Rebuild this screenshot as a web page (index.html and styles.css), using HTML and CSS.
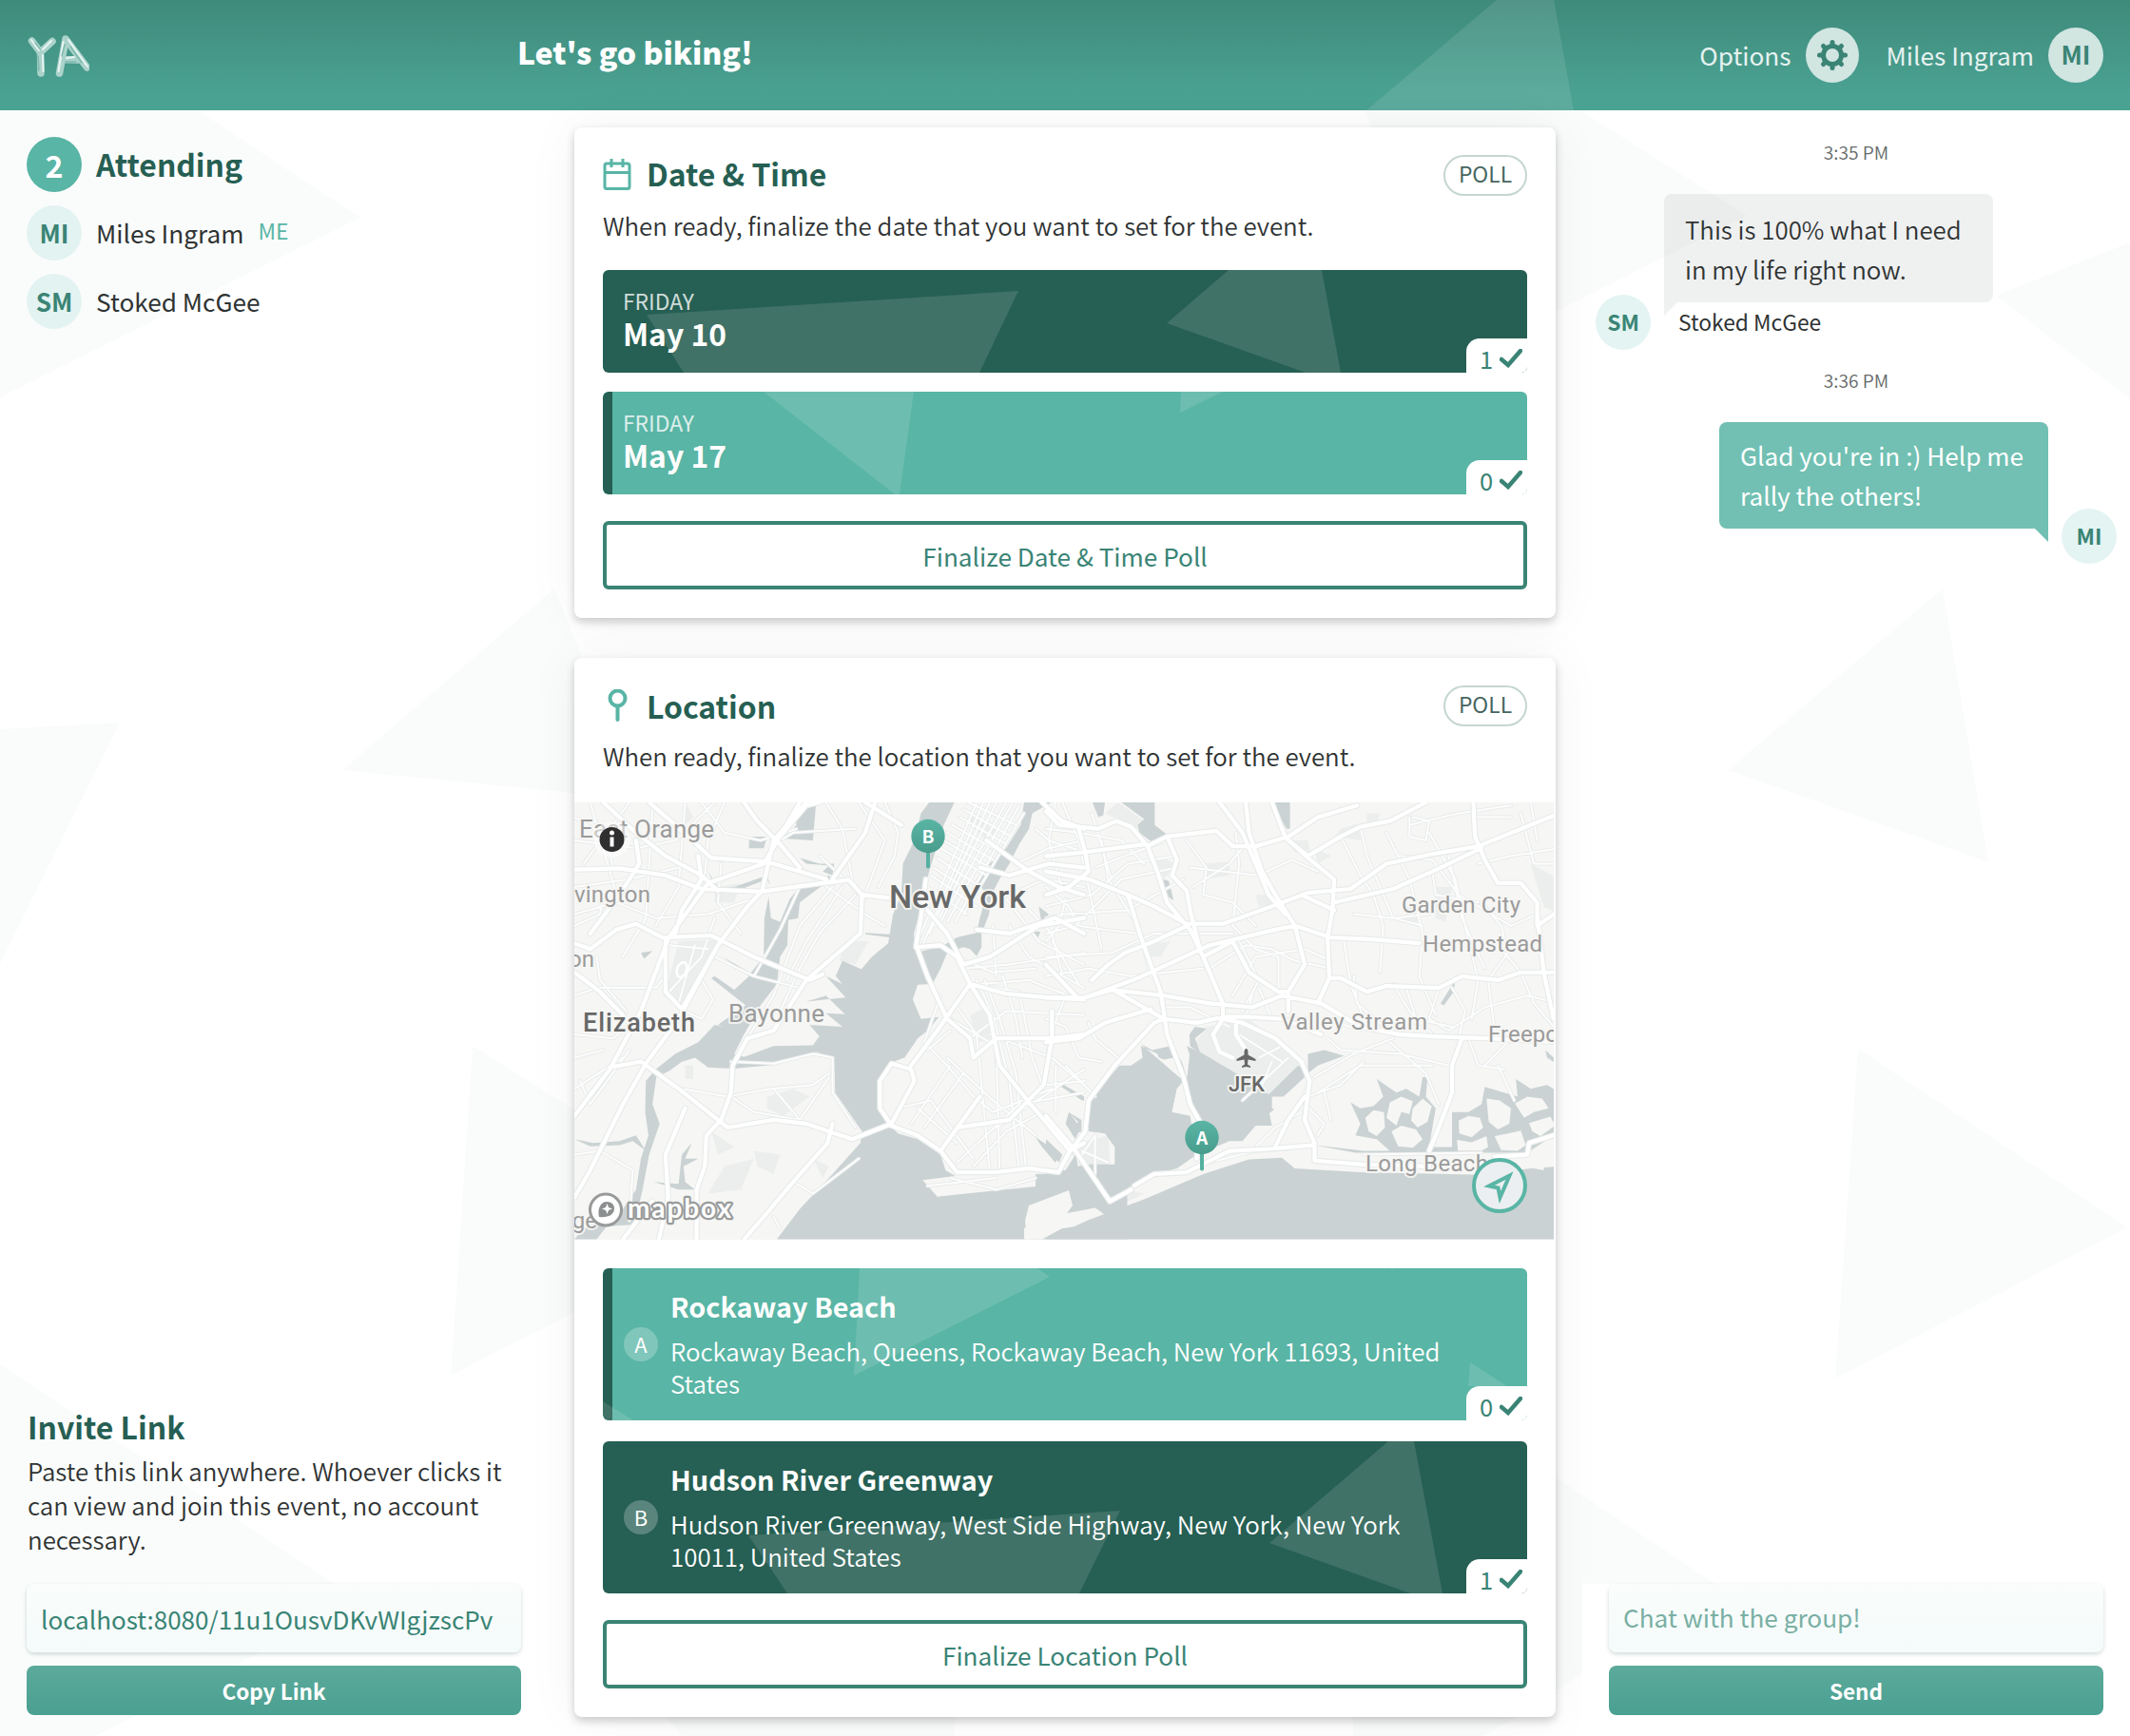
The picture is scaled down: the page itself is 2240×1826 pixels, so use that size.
FILE: index.html
```html
<!DOCTYPE html>
<html lang="en">
<head>
<meta charset="utf-8">
<title>Let's go biking!</title>
<link rel="stylesheet" href="styles.css">
</head>
<body>
<svg class="backdrop" viewBox="0 0 2240 1826" aria-hidden="true">
  <path d="M0 116H208L379 229L0 418Z M126 760L0 1014V767Z M583 619L360 810L640 838V760Z M497 1100L474 1447L640 1362V1190Z M0 1435L380 1684L100 1826H0Z M1436 116H1662L1837 227L1637 327H1500Z M2099 311L2240 255V420Z M2043 619L1817 810L2091 907Z M1954 1103L2237 1291L1930 1450Z M1600 1530L1804 1666L1600 1803Z M680 1780H1007L1003 1826H717Z M1423 1780H1640L1560 1826H1423Z"/>
</svg>

<header class="topbar">
  <svg class="topbar-shape" viewBox="0 0 2240 116" aria-hidden="true"><path d="M1574 0H1634L1655 116H1437Z"/></svg>
  <svg class="logo" viewBox="0 0 66 47" role="img" aria-label="YA">
    <g class="logo-body"><path d="M5.500 8L14.500 20L27 8.500M14.500 20L15 42"/><path d="M34.500 42L41 6L63.500 36M37 27.500L54 28"/></g>
    <g class="logo-shine"><path d="M5 7L13 18M26 8L17 17M17 23L17.500 40"/><path d="M33.500 40L38.500 9M44 7L64 35M42 26L50 25"/></g>
    <g class="logo-shade"><path d="M9 10L14 16.500M12 24L13 39"/><path d="M40 12L37 24M46 14L58 31M41 30L52 30"/></g>
  </svg>
  <h1 class="event-title">Let's go biking!</h1>
  <nav class="topbar-nav">
    <span class="nav-label">Options</span>
    <span class="disc disc-options">
      <svg viewBox="-18 -18 36 36" class="gear" aria-hidden="true">
        <circle r="9.500"/>
        <path d="M0-10V-13.500M0 10V13.500M-10 0H-13.500M10 0H13.500M7-7L9.500-9.500M-7-7L-9.500-9.500M7 7L9.500 9.500M-7 7L-9.500 9.500"/>
      </svg>
    </span>
    <span class="nav-label nav-user">Miles Ingram</span>
    <span class="disc disc-nav">MI</span>
  </nav>
</header>

<main class="layout">
  <aside class="side side-left">
    <section class="attending">
      <div class="person"><span class="disc disc-count">2</span><h2 class="heading">Attending</h2></div>
      <div class="person"><span class="disc">MI</span><span class="name">Miles Ingram</span><span class="me">ME</span></div>
      <div class="person"><span class="disc">SM</span><span class="name">Stoked McGee</span></div>
    </section>
    <section class="invite">
      <h2 class="heading">Invite Link</h2>
      <p class="invite-text">Paste this link anywhere. Whoever clicks it<br>can view and join this event, no account<br>necessary.</p>
      <div class="field field-link">localhost:8080/11u1OusvDKvWIgjzscPv</div>
      <button class="button">Copy Link</button>
    </section>
  </aside>

  <div class="center">
    <section class="card card-date">
      <div class="card-head">
        <svg class="card-icon" viewBox="0 0 30 34" aria-hidden="true"><rect x="2" y="5" width="26" height="26.500" rx="2"/><path d="M2 14.500H28M9 0V9M21 0V9"/></svg>
        <h2 class="heading">Date &amp; Time</h2>
        <span class="pill">POLL</span>
      </div>
      <p class="card-text">When ready, finalize the date that you want to set for the event.</p>
      <div class="option option-date option-dark">
        <svg class="option-shapes" viewBox="0 0 972 108"><path d="M46 47L437 22L396 108H85ZM658 0H756L776 108H739L593 56Z"/></svg>
        <div class="option-body"><span class="weekday">FRIDAY</span><span class="option-title">May 10</span></div>
        <span class="votes">1<svg viewBox="0 0 24 20"><path d="M2 11L9 17L22 2"/></svg></span>
      </div>
      <div class="option option-date option-light">
        <svg class="option-shapes" viewBox="0 0 972 108"><path d="M169 0H327L312 108H307ZM608 0H652L607 22Z"/></svg>
        <div class="option-body"><span class="weekday">FRIDAY</span><span class="option-title">May 17</span></div>
        <span class="votes">0<svg viewBox="0 0 24 20"><path d="M2 11L9 17L22 2"/></svg></span>
      </div>
      <button class="button-outline">Finalize Date &amp; Time Poll</button>
    </section>

    <section class="card card-location">
      <div class="card-head">
        <svg class="card-icon icon-pin" viewBox="0 0 30 34" aria-hidden="true"><circle cx="15.500" cy="9.500" r="8"/><path d="M15.500 18V32"/></svg>
        <h2 class="heading">Location</h2>
        <span class="pill">POLL</span>
      </div>
      <p class="card-text">When ready, finalize the location that you want to set for the event.</p>
      <svg class="map" viewBox="0 0 1030 460">
        <defs>
          <linearGradient id="pin" x1="0" y1="0" x2="0" y2="1"><stop offset="0" stop-color="#5ab5a5"/><stop offset="1" stop-color="#489c8c"/></linearGradient>
          <g id="major">
            <g transform="translate(-4 -164.080) scale(.34439 .40816)">
              <path class="way" d="M12 575L150 572L290 590L400 625L580 632L770 610L850 602L890 640L970 648M12 1210L120 1090L215 940L300 750L420 610L590 560L700 402M12 1420L60 1350L160 1180L230 1075L330 960L450 770L540 670L585 630L620 500L720 402M12 765L60 780L140 730L200 715L280 750L430 745L560 800L730 860L770 845M100 402L200 480L290 540L400 590L450 630M240 402L320 460L430 545L600 555L780 600M530 402L570 450L640 510L700 570M12 840L90 890L160 950M120 1085L215 1070L330 1140L450 1220L480 1240L620 1220L720 1230L860 1270L980 1230L1050 1120L1040 1090L980 1075L945 1120L945 1190L980 1235L1060 1260L1130 1300L1180 1355L1300 1355L1400 1345L1490 1355L1525 1300L1568 1280M460 1220L490 1150L495 1080L540 1010L620 990L720 860L830 780L885 740L890 640M350 1190L290 1310L298 1420L270 1528M460 1220L415 1260L410 1340L385 1400L385 1528M290 750L290 890L340 935L440 785M160 1528L250 1430M530 1528L610 1450L680 1380L785 1280L800 1230M800 600L900 480L930 402M900 402L1010 460M630 500L720 410L760 402M1085 600L1070 700L1055 770L1090 850L1150 960L1220 1010L1230 1060L1300 1010L1470 1010L1568 1000M1055 775L1130 770L1180 800L1220 870L1330 895L1460 905L1568 910M1220 870L1120 990L1040 1080M1090 680L1150 740L1200 820L1280 800L1430 720L1568 700M1250 570L1340 590L1460 560L1568 570M1270 500L1400 580L1490 620L1568 640M1440 402L1500 450L1568 470M1220 870L1280 950L1310 1080L1400 1175L1525 1300M1180 1355L1130 1300L1250 1160M1470 940L1470 1010L1445 1130L1340 1220L1180 1240M1240 730L1340 740L1480 700L1568 740M390 540L400 600L340 680L320 740M200 500L210 560L150 640L60 740"/>
            </g>
            <g transform="translate(496 -164.080) scale(.34439 .40816)">
              <path class="way" d="M0 425L40 460L160 470L215 450L260 465L310 515L370 490L520 475L570 515L640 515L740 490L830 440L950 410M0 540L120 530L300 510M0 580L130 600L250 640L330 670L430 715L540 715L690 670L800 635L930 625L1040 560L1180 535L1320 515L1568 430M310 515L340 580L370 660L440 730L480 800L540 920L540 960M370 490L400 550L385 590L430 630L440 680L470 780M610 402L620 480L660 580L700 640L760 720L790 820L740 890L740 940M530 402L600 480L650 580L680 640L730 690M690 402L730 490L800 545L880 600L875 680L860 750L865 855L830 920M740 500L800 540L900 490L960 465L1050 450L1160 402M880 660L1060 625L1180 580L1330 520M1305 402L1310 490L1340 550L1380 610L1450 610L1500 660L1500 720L1568 680M0 905L120 905L280 855L500 770L700 730L760 720L870 750L1000 755L1140 765M90 900L0 820M215 890L360 960L460 970L540 955L620 955L720 960L840 1000M120 905L200 885L360 900L500 920L630 930L720 900L840 920L960 980L1080 1000L1180 1005L1350 1010L1568 1020M480 800L570 760L620 840L710 890L740 890M865 855L900 855L980 890L1040 875L1200 880L1270 850L1380 860L1450 840L1568 840M540 960L510 1000L530 1045L570 1060M540 960L600 970L700 1010L780 1070L805 1120L790 1220L820 1280L820 1325L970 1335L1170 1340M250 640L290 750L350 890L370 1000L420 1110L440 1180L470 1225L460 1320M0 1210L90 1300L195 1430L260 1400M80 1295L120 1250L130 1170L210 1080L330 970L360 960M0 1020L100 1010L180 970L320 935M270 1390L330 1360L430 1355L560 1300L680 1295L820 1285M1270 1010L1240 1080L1240 1150L1200 1240L1170 1300M1370 1315L1470 1310L1475 1280L1568 1255M100 470L120 530L130 580L70 620L0 640M1500 690L1520 840L1550 960M140 860L190 820L240 790L330 760L430 720M780 640L880 680M580 970L580 1000L610 1040M790 1160L740 1220L700 1290"/>
            </g>
          </g>
          <g id="minor">
            <g transform="translate(-4 -164.080) scale(.34439 .40816)">
              <path class="way" d="M12 440L110 490L130 570M12 500L200 520L320 500L440 402M60 402L140 640M180 402L40 560M250 420L230 700L160 800M12 620L180 600L330 570M12 690L140 660L260 700L420 690L560 650M12 720L90 690L100 640M350 402L330 620L260 720M400 402L470 480L580 500L690 470M470 402L420 500L410 590M12 900L80 880L260 880L300 840M80 800L90 860L170 940M440 700L400 800L290 900M12 1000L130 1010L220 950M12 1140L160 1060M12 1060L100 1040M30 1120L60 1180L180 1040M340 1140L480 1160L610 1140L740 1130L790 1100M490 1070L620 1075L740 1050L800 1060L800 1150L870 1240M620 1140L700 1220M490 1160L560 1200L700 1220L790 1110M700 620L640 730L560 850M800 620L700 720L620 900L540 1010M830 620L720 760L660 860M870 640L760 740L700 830L640 940M700 570L900 690L960 720M760 540L900 650M780 402L830 470L860 600M620 510L680 480L870 470M460 560L450 660L520 740M12 1310L90 1300L190 1350L180 1480M680 1380L740 1410L880 1320M620 1470L640 1500M440 800L560 850L700 880M300 770L420 780M380 770L330 920M400 860L435 910L400 960L350 940M960 402L1000 480L990 540L940 620M880 402L960 500L900 640M1160 990L1090 1040M1160 960L1300 1030L1310 1350M1180 930L1240 1000L1280 1350M1240 860L1290 950L1340 1120L1370 1350M1265 860L1310 960L1360 1100L1390 1340M1220 870L1370 890L1410 1060L1440 1130M1320 850L1360 960L1380 1060M1130 900L1080 1020L1150 1080L1230 1160L1290 1200L1470 1140M1000 1190L1100 1170L1230 1320M1040 1230L1160 1080M1080 1240L1200 1100M1060 1190L1180 1280M1150 1060L1290 1170L1420 1260M1280 1000L1470 1060L1568 1130M1300 1240L1568 1090M1180 1330L1370 1180L1568 1150M1230 1340L1330 1250L1440 1200M1220 1010L1330 940L1568 950M1200 830L1340 820L1568 790M1250 870L1400 860L1520 900M1180 800L1290 840L1420 830M1290 720L1300 850M1340 720L1400 800L1568 880M1330 650L1430 760L1568 820M1400 680L1470 740L1500 840M1340 640L1450 600L1568 620M1360 560L1460 520L1568 500M1420 470L1460 500L1568 530M1480 402L1460 500L1500 620M1160 1370L1300 1400L1420 1370M1090 1390L1300 1370"/>
              <path class="way" d="M1060 760L1240 402M1075 770L1260 402M1095 740L1280 402M1115 720L1300 402M1130 710L1330 402M1150 710L1350 402M1175 710L1370 410M1200 690L1385 430M1090 620L1210 690M1100 590L1240 670M1110 570L1250 650M1120 545L1250 620M1130 520L1270 590M1140 500L1280 570M1150 480L1290 550M1165 460L1310 530M1190 440L1330 510M1200 420L1345 490M1215 402L1360 460"/>
            </g>
            <g transform="translate(496 -164.080) scale(.34439 .40816)">
              <path class="way" d="M0 470L100 480L230 500L300 560M50 402L100 500L150 700L170 780M0 620L70 670L100 720L180 730L290 740M0 670L140 640L250 560L400 540M0 740L90 720L230 600L400 570M0 800L200 790L330 740L570 740M0 700L60 690L250 680L420 600M0 850L130 830L260 850L480 830M150 570L240 540L370 500M20 760L100 870M60 650L40 720L0 760M170 500L190 600L280 720L320 850M140 430L200 600M430 500L490 570L480 640L570 660L640 720M440 570L650 590L750 550L830 580M450 620L560 560L620 500M580 480L590 560L570 720L640 780L710 800L710 880M500 830L610 770L690 780M570 900L640 800L790 780L870 810M600 940L650 860L590 760M690 780L760 810L870 830M900 490L960 590L1000 640L1030 720L1020 840M960 465L980 540L1060 700L1150 720M1110 440L1110 490L1160 500L1170 450L1120 440M1040 480L1110 600L1150 740L1140 850L1190 950M1170 480L1250 600L1290 760L1320 860L1300 960M1230 540L1270 700L1340 830M1080 540L1180 550L1260 640L1420 720L1500 690M1180 580L1190 640L1320 660M1330 660L1390 720L1410 790L1350 860L1370 990M940 690L1060 700L1170 690M910 760L930 870L980 980M940 850L950 920L1060 1000M1060 870L1110 940L1180 1000M1100 880L1130 960L1240 980M1200 880L1170 960L1230 990L1340 930L1470 900L1568 920M1240 880L1280 940L1260 1010M1390 780L1450 840L1490 920L1550 980M1450 430L1490 560L1568 560M1480 402L1500 500M1320 560L1420 540L1568 520M1310 440L1420 440M1110 460L1260 430L1420 410M0 960L60 980L100 1060L170 1070M60 900L10 1010L0 1100M130 970L150 1010L220 1060M30 1080L30 1200M60 1080L150 1160M0 1130L120 1120M360 930L440 930L560 980M630 900L600 980M650 880L690 960M860 1010L900 1040L1080 1050L1230 1080M820 1110L940 1050L1060 1010M830 1150L960 1080L1180 1080M800 1130L780 1170L850 1230L830 1260M850 1150L870 1220M1050 1020L1160 1100L1200 1180M1380 1080L1430 1170M1290 1010L1320 1080L1400 1090M1340 1080L1410 1020L1500 1010M800 1160L900 1130L970 1070M720 960L860 960L960 990M780 1200L700 1240L640 1290M500 1330L640 1300L740 1295"/>
              <path class="way" d="M590 1000L720 1070M650 1060L720 1030M740 1060L600 1170M690 1070L660 1130M110 1300L190 1330M150 1260L150 1360M110 1310L150 1260M970 1310L1330 1305"/>
            </g>
          </g>
        </defs>
        <rect class="land" width="1030" height="460"/>
        <g class="park" transform="translate(-4 -164.080) scale(.34439 .40816)">
          <path d="M330 760L450 755L350 935L290 895ZM350 402L375 440L350 460ZM840 760L910 760L870 820L820 810ZM1240 430L1310 470L1270 500L1210 450ZM600 1160L680 1140L730 1160L650 1210L600 1190ZM470 1340L560 1320L520 1400L420 1410ZM560 1300L640 1310L620 1360L570 1340ZM1220 950L1270 930L1300 1010L1240 1020ZM740 1320L790 1340L770 1370ZM350 1080H375V1115H350ZM430 1250L500 1290L450 1310ZM440 620L520 610L500 660L440 660Z"/>
        </g>
        <g class="park" transform="translate(496 -164.080) scale(.34439 .40816)">
          <path d="M330 540L400 560L360 600ZM480 560L560 555L560 590L490 600ZM730 500L800 500L810 540L760 530ZM180 430L220 402L300 450L280 470ZM490 980L620 960L780 1070L680 1160L440 1040ZM300 770L380 760L350 800L300 800ZM640 640L700 640L690 670L650 670ZM820 520L870 540L830 560ZM980 430L1020 430L1010 460L980 455ZM1480 560L1568 600V690L1520 670ZM1100 670H1135V710H1100ZM60 1290L190 1260L200 1380L130 1380L100 1330ZM900 470L960 455L960 500L880 490ZM1190 620L1240 620L1220 710L1190 700ZM150 1450L250 1400L300 1410L130 1480Z"/>
        </g>
        <g class="water" transform="translate(-4 -164.080) scale(.34439 .40816)">
          <path d="M1095 402H1172L1140 460L1110 540L1088 600L1075 660L1048 740L1055 790L1140 770L1180 750L1240 738L1250 700L1270 640L1240 600L1290 550L1330 520L1375 460L1385 402H1468L1410 430L1400 470L1370 510L1340 560L1310 600L1285 640L1278 690L1255 740L1255 775L1240 798L1220 780L1200 775L1150 790L1130 830L1105 870L1060 872L1045 910L1070 960L1125 955L1090 990L1060 1010L1020 1060L970 1075L943 1130L943 1200L975 1235L1000 1255L1060 1270L1130 1310L1145 1350L1175 1365L1075 1375L1120 1418L1420 1392L1420 1360L1490 1358L1568 1335H1700V1528H630L700 1450L800 1360L885 1280L890 1250L808 1150L805 1060L750 1045L700 1060L620 1078L500 1088L420 1085L380 1060L340 1070L300 1095L262 1110L250 1180L272 1230L240 1310L220 1400L195 1490L110 1495L80 1528H12L40 1500L160 1450L200 1400L215 1320L238 1260L228 1200L230 1120L260 1090L320 1050L390 1020L440 975L490 985L535 990L500 1050L530 1058L620 1030L740 1028L760 1005L730 975L830 980L780 945L838 948L780 900L720 915L780 910L840 905L780 850L830 870L810 850L830 810L888 832L920 800L970 765L975 740L985 690L1010 640L1015 560L1050 500L1070 430ZM605 645L612 700L640 710L670 650L690 630L790 590L795 600L730 640L700 660L695 700L665 705L662 770L640 800L630 870L580 925L530 1000L450 975L535 925L430 855L440 850L500 885L545 850L465 800L550 842L590 800L592 700ZM685 430L720 402H750L740 500L650 495L690 460ZM700 545L760 560L805 560L800 590L770 580L790 565L720 560ZM545 490L600 490L590 520L545 520ZM420 580L450 620L500 620L600 590L610 615L600 600L500 632L450 635ZM215 790L250 785L225 805ZM900 738L975 742V750L900 742ZM12 1270L70 1280L150 1275L200 1260L230 1300L190 1275L150 1285L60 1288ZM340 1310L370 1280L350 1320L390 1320L345 1340L350 1380L380 1400L330 1400L255 1380L330 1385ZM1490 1125L1568 1160V1172L1490 1130ZM1420 1265L1500 1310L1480 1330L1440 1290ZM1520 1200L1560 1220V1250L1530 1260L1550 1225ZM1430 670L1460 690L1440 720ZM1415 735L1435 735L1425 755Z"/>
          <path class="land" d="M1385 1500L1440 1465L1520 1450L1600 1445L1640 1470L1580 1490L1500 1500L1440 1528H1385Z"/>
        </g>
        <g class="water" transform="translate(496 -164.080) scale(.34439 .40816)">
          <path d="M142 402L160 440L175 435L180 402ZM230 402H332V460L370 485L320 502L285 480L280 460L300 445ZM685 402H745V470H735ZM358 600L375 605L390 655L365 640ZM290 1025L325 1040L380 1030L395 1075L425 1125L460 1200L490 1300L560 1275L600 1275L640 1235L690 1235L680 1195L790 1110L795 1090L770 1080L680 1155L640 1130L540 1080L470 1045L455 1010L490 985L455 980L438 1000L440 1030L490 1060L540 1100L560 1130L480 1050L430 1030L450 1080L430 1110L415 1070L385 1035L390 1060L360 1065L345 1060L340 1050L290 1030L295 1060L260 1080L225 1080L130 1170L130 1250L180 1255L210 1290L210 1345L190 1385L240 1400L330 1360L400 1345L460 1310L440 1210L385 1200L400 1140L420 1120ZM0 1528L130 1478L300 1425L480 1360L620 1322L720 1318L760 1345L960 1355L1330 1362L1480 1345L1568 1340V1528ZM0 1350L60 1350L90 1310L110 1385L170 1385L190 1440L100 1455L0 1470ZM970 1300L820 1285L945 1305H1470L1568 1250V1150L1530 1130L1480 1140L1435 1115L1440 1160L1340 1135L1330 1180L1290 1200L1240 1200L1240 1290H1170L1180 1240L1190 1190L1160 1160L1165 1110L1150 1110L1140 1160L1100 1140L1070 1150L1010 1115L1030 1160L1000 1185L960 1190L930 1175L960 1230L945 1260L1010 1270L1050 1300ZM800 1050L850 1040L910 1055L830 1080L800 1100ZM1205 920L1250 860L1245 890L1215 925ZM35 1120L115 1160L110 1170L40 1130ZM70 1200L105 1240L90 1270L60 1230ZM0 1270L50 1310L40 1330L0 1290ZM1525 1040L1550 1060L1568 1070V1080L1530 1060Z"/>
          <path class="water" d="M440 1040L540 1085L680 1160L700 1190L640 1235L490 1300L430 1120Z"/>
          <path class="land" d="M1050 1175L1085 1160L1120 1172L1110 1205L1085 1200L1070 1235L1040 1215ZM1120 1190L1150 1165L1178 1185L1165 1225L1135 1240L1115 1222ZM975 1215L1000 1195L1032 1200L1035 1240L1010 1262L985 1250ZM1055 1250L1085 1235L1130 1245L1150 1270L1120 1292L1075 1288ZM1260 1222L1290 1210L1325 1215L1335 1240L1300 1265L1262 1255ZM1345 1165L1385 1170L1420 1190L1415 1230L1380 1245L1352 1225ZM1432 1178L1470 1160L1515 1165L1535 1190L1490 1200L1460 1215ZM1255 1272L1300 1278L1345 1262L1350 1290L1330 1300H1258ZM1370 1262L1410 1255L1450 1248L1465 1285L1440 1300L1390 1298ZM1475 1228L1540 1212L1555 1235L1510 1262L1485 1250Z"/>
          <path class="land" d="M690 1160L740 1160L720 1200L690 1190ZM1500 1330L1520 1310V1350L1490 1345ZM385 1200L400 1140L425 1115L440 1180V1205Z"/>
        </g>
        <path class="land" d="M478 424L520 408L524 424L502 454L476 460L474 440Z"/>
        <use href="#minor" class="road minor-casing"/><use href="#minor" class="road minor-fill"/>
        <use href="#major" class="road major-casing"/><use href="#major" class="road major-fill"/>
        <ellipse class="track" cx="113" cy="176" rx="5" ry="8" transform="rotate(20 113 176)"/>
        <g class="town">
          <text x="5" y="36.500" textLength="142">East Orange</text>
          <text x="0" y="105" textLength="80" class="town-s">vington</text>
          <text x="21" y="173" text-anchor="end" class="town-s">on</text>
          <text x="162" y="231" textLength="101">Bayonne</text>
          <text x="24" y="448" text-anchor="end" class="town-s">ge</text>
          <text x="870" y="116" textLength="125" class="town-s">Garden City</text>
          <text x="892" y="156.500" textLength="126" class="town-s">Hempstead</text>
          <text x="743" y="239" textLength="154" class="town-s">Valley Stream</text>
          <text x="961" y="252" textLength="74" class="town-s">Freepo</text>
          <text x="832" y="388" textLength="129" class="town-s">Long Beach</text>
        </g>
        <g class="city">
          <text x="331" y="111" textLength="144" class="city-l">New York</text>
          <text x="9" y="241" textLength="118">Elizabeth</text>
          <text x="688" y="304" textLength="38" class="airport">JFK</text>
        </g>
        <path class="plane" d="M706.500 259C708 259 708.500 261 708.500 263V265.500L716.500 270V272L708.500 270.500L708 275.500L711 277.500V279L706.500 278L702 279V277.500L705 275.500L704.500 270.500L696.500 272V270L704.500 265.500V263C704.500 261 705 259 706.500 259Z"/>
        <g class="marker"><path d="M372 50V67.500"/><circle cx="372" cy="35.500" r="17.700"/><text x="372" y="43">B</text></g>
        <g class="marker"><path d="M660 367V385.500"/><circle cx="660" cy="352.500" r="17.700"/><text x="660" y="360">A</text></g>
        <g class="info"><circle cx="39.500" cy="39" r="19" class="info-halo"/><circle cx="39.500" cy="39" r="13"/><path d="M39.500 36.500V46.500"/><circle cx="39.500" cy="32" r="2.500" class="info-dot"/></g>
        <g class="mapbox">
          <circle cx="33" cy="428.500" r="16.500"/>
          <path d="M26 436C24 427 28 420 34 420C39 420 42 423 42 427C42 434 35 437 26 436Z"/>
          <path class="mapbox-star" d="M34.500 422L36 426L40 427.500L36 429L34.500 433L33 429L29 427.500L33 426Z"/>
          <text x="56" y="436.500" textLength="109">mapbox</text>
        </g>
        <g class="locate"><circle cx="973" cy="403" r="27"/><path d="M983.500 392.500L962 403.500L971.500 405.500L973.500 415.500Z"/></g>
      </svg>
      <div class="option option-place option-light">
        <svg class="option-shapes" viewBox="0 0 972 160"><path d="M270 0H457L470 9L264 113ZM0 140L32 160H0ZM912 99L951 124H910ZM829 0H831L830 3Z"/></svg>
        <span class="letter">A</span>
        <div class="option-body"><span class="place-title">Rockaway Beach</span><span class="address">Rockaway Beach, Queens, Rockaway Beach, New York 11693, United<br>States</span></div>
        <span class="votes">0<svg viewBox="0 0 24 20"><path d="M2 11L9 17L22 2"/></svg></span>
      </div>
      <div class="option option-place option-dark">
        <svg class="option-shapes" viewBox="0 0 972 160"><path d="M826 0H853L883 160H849L701 107ZM153 99L544 73L501 160H194Z"/></svg>
        <span class="letter">B</span>
        <div class="option-body"><span class="place-title">Hudson River Greenway</span><span class="address">Hudson River Greenway, West Side Highway, New York, New York<br>10011, United States</span></div>
        <span class="votes">1<svg viewBox="0 0 24 20"><path d="M2 11L9 17L22 2"/></svg></span>
      </div>
      <button class="button-outline">Finalize Location Poll</button>
    </section>
  </div>

  <aside class="side side-right">
    <section class="chat">
      <time class="stamp">3:35 PM</time>
      <div class="message message-in">
        <span class="disc disc-chat">SM</span>
        <div class="message-main">
          <div class="bubble bubble-in">This is 100% what I need<br>in my life right now.</div>
          <span class="author">Stoked McGee</span>
        </div>
      </div>
      <time class="stamp stamp-second">3:36 PM</time>
      <div class="message message-out">
        <div class="bubble bubble-out">Glad you're in :) Help me<br>rally the others!</div>
        <span class="disc disc-chat">MI</span>
      </div>
    </section>
    <section class="composer">
      <div class="field field-chat">Chat with the group!</div>
      <button class="button">Send</button>
    </section>
  </aside>
</main>
</body>
</html>
```
FILE: styles.css
```css
* { box-sizing: border-box; }

body {
  margin: 0;
  width: 2240px;
  height: 1826px;
  overflow: hidden;
  position: relative;
  background: #fff;
  color: #2f3333;
  font-family: "Noto Sans CJK SC", "Noto Sans", sans-serif;
  font-size: 26.2px;
}

h1, h2, p { margin: 0; }
button { font-family: inherit; padding: 0; display: block; width: 100%; }

.backdrop { position: absolute; inset: 0; width: 2240px; height: 1826px; fill: #fafcfb; }

/* header */
.topbar {
  position: relative;
  height: 116px;
  padding: 0 28px;
  display: grid;
  grid-template-columns: 516px 1fr auto;
  align-items: center;
  background: linear-gradient(#3f8a7b, #4aa292 85%);
  color: #fff;
}
.topbar-shape { position: absolute; inset: 0; width: 2240px; height: 116px; fill: rgba(255, 255, 255, .1); }
.logo { width: 66px; height: 47px; fill: none; stroke-linecap: round; stroke-linejoin: round; }
.logo-body { stroke: #abd3cb; stroke-width: 7.5px; }
.logo-shine { stroke: #e9f6f3; stroke-width: 2px; }
.logo-shade { stroke: #7fb9ae; stroke-width: 1.5px; }
.event-title { font-size: 32px; line-height: 46px; font-weight: 900; padding-bottom: 8px; }
.topbar-nav { display: flex; align-items: center; position: relative; padding-bottom: 1px; }
.nav-label { color: #e6f2f0; margin-right: 15px; padding-top: 1px; }
.nav-user { margin-left: 29px; }

.disc {
  width: 58px;
  height: 58px;
  border-radius: 50%;
  flex: none;
  display: flex;
  align-items: center;
  justify-content: center;
  background: #e3f3f1;
  color: #3a8475;
  font-size: 26.2px;
  line-height: 36px;
  padding-bottom: 1px;
  font-weight: 700;
}
.disc-count { background: #59b5a5; color: #fff; font-size: 32.2px; }
.disc-nav { background: #d1e5e1; }
.disc-options { width: 56px; background: #d1e5e1; padding-bottom: 0; }
.disc-chat { font-size: 22.8px; background: #e4f4f2; }
.gear { width: 36px; height: 36px; fill: none; stroke: #3a8475; stroke-width: 5px; stroke-linecap: round; }

/* columns */
.layout { display: grid; grid-template-columns: 604px 1032px 604px; height: 1710px; position: relative; }
.side { display: flex; flex-direction: column; justify-content: space-between; }
.side-left { padding: 28px 56px 22px 28px; }
.heading { color: #265f53; font-size: 31.9px; line-height: 46px; font-weight: 700; }

.attending { display: flex; flex-direction: column; gap: 14px; }
.person { display: flex; align-items: center; }
.person .heading, .name { margin-left: 15px; }
.person .heading { padding-bottom: 2px; }
.name { padding-bottom: 1px; }
.me { margin-left: 15px; color: #59b5a5; font-size: 22.8px; padding-bottom: 6px; }

.invite .heading { padding-left: 1px; }
.invite-text { padding-left: 1px; line-height: 36px; margin-top: 6px; font-weight: 350; font-size: 25.85px; }

.field {
  height: 72px;
  border-radius: 8px;
  display: flex;
  align-items: center;
  padding-left: 15px;
  background: linear-gradient(#fafdfc, #f4fbfa);
  box-shadow: 0 2px 4px rgba(39, 94, 82, .22);
  color: #3a8475;
}
.field-link { margin-top: 29px; padding-top: 1px; font-size: 26px; }
.field-chat { color: #7aafa4; padding-bottom: 2px; }
.button {
  height: 52px;
  margin-top: 14px;
  border: 0;
  border-radius: 8px;
  background: linear-gradient(#5caa9b, #4aa091);
  color: #fff;
  font-size: 22.5px;
  font-weight: 700;
}

/* cards */
.center { padding-top: 18px; display: flex; flex-direction: column; gap: 42px; }
.card {
  background: #fff;
  border-radius: 8px;
  padding: 28px 30px 30px;
  box-shadow: 0 4px 10px rgba(0, 0, 0, .2), 0 0 56px rgba(0, 0, 0, .05);
}
.card-date { height: 516px; }
.card-location { height: 1114px; }
.card-head { display: flex; align-items: center; height: 44px; }
.card-head .heading { padding-bottom: 4px; }
.card-location .heading { padding-bottom: 1px; }
.card-icon { width: 30px; height: 34px; margin-right: 16px; fill: none; stroke: #59b5a5; stroke-width: 3px; }
.icon-pin { stroke-width: 4px; stroke-linecap: round; }
.pill {
  margin-left: auto;
  width: 88px;
  height: 43px;
  border: 2px solid #c5d6d1;
  border-radius: 22px;
  display: flex;
  align-items: center;
  justify-content: center;
  padding-bottom: 3px;
  color: #47665f;
  font-size: 22.8px;
  line-height: 36px;
}
.card-text { line-height: 38px; margin-top: 12px; font-weight: 350; font-size: 25.85px; }

.option { position: relative; border-radius: 6px; overflow: hidden; color: #fff; }
.option-dark { background: #265f53; }
.option-light { background: #59b5a5; }
.option-light::before { content: ""; position: absolute; left: 0; top: 0; bottom: 0; width: 10px; border-radius: 6px 0 0 6px; background: #265f53; }
.option-shapes { position: absolute; inset: 0; width: 100%; height: 100%; fill: rgba(255, 255, 255, .12); }
.option-body { position: relative; display: flex; flex-direction: column; }
.option-date { height: 108px; margin-top: 20px; padding: 17px 21px; }
.card-text + .option-date { margin-top: 28px; }
.weekday { font-size: 22.8px; line-height: 32px; color: rgba(255, 255, 255, .8); }
.option-title { font-size: 31.8px; line-height: 34px; font-weight: 700; }
.option-place { height: 160px; margin-top: 22px; padding: 18px 22px; display: flex; gap: 13px; }
.map + .option-place { margin-top: 30px; }
.letter {
  position: relative;
  width: 36px;
  height: 36px;
  margin-top: 44px;
  border-radius: 50%;
  flex: none;
  display: flex;
  align-items: center;
  justify-content: center;
  background: rgba(255, 255, 255, .24);
  font-size: 22px;
  line-height: 34px;
  padding-bottom: 2px;
}
.place-title { font-size: 28.8px; line-height: 44px; font-weight: 700; }
.address { line-height: 34px; margin-top: 8px; font-weight: 350; font-size: 25.85px; white-space: nowrap; }
.votes {
  position: absolute;
  right: 0;
  bottom: 0;
  width: 64px;
  height: 36px;
  padding: 5px 5px 0 14px;
  border-top-left-radius: 14px;
  display: flex;
  align-items: center;
  justify-content: space-between;
  background: #fff;
  color: #3a8475;
  font-size: 25.5px;
  line-height: 30px;
}
.votes svg { width: 24px; height: 20px; margin-bottom: 0; fill: none; stroke: #3a8475; stroke-width: 4.5px; stroke-linecap: round; }
.button-outline {
  height: 72px;
  margin-top: 28px;
  border: 4px solid #3a8475;
  border-radius: 6px;
  background: #fff;
  color: #3a8475;
  font-size: 26.2px;
  padding-top: 2px;
}

/* map */
.map {
  display: block;
  width: 1030px;
  height: 460px;
  margin: 30px 0 0 -30px;
  font-family: Roboto, sans-serif;
}
.land { fill: #f6f6f4; }
.park { fill: #eceeed; }
.water { fill: #cad2d3; }
.road { fill: none; stroke-linejoin: round; stroke-linecap: round; }
.way { vector-effect: non-scaling-stroke; }
.minor-casing { stroke: #e8ebeb; stroke-width: 3.8px; }
.minor-fill { stroke: #fdfdfd; stroke-width: 2px; }
.major-casing { stroke: #e7ebea; stroke-width: 6.4px; }
.major-fill { stroke: #fff; stroke-width: 4.2px; }
.track { fill: none; stroke: #fff; stroke-width: 2.5px; }
.town, .city { paint-order: stroke; stroke: rgba(246, 246, 244, .9); stroke-width: 4px; stroke-linejoin: round; }
.town { fill: #9b9b9b; font-size: 26px; }
.town-s { font-size: 24px; }
.city { fill: #686868; font-size: 27px; font-weight: 500; }
.city-l { font-size: 34px; }
.airport { font-size: 22px; }
.plane { fill: #686868; }
.marker { stroke: #55b0a0; stroke-width: 4px; stroke-linecap: round; }
.marker circle { fill: url(#pin); stroke: none; }
.marker text { fill: #fff; stroke: none; font: 700 19px "Noto Sans CJK SC", sans-serif; text-anchor: middle; }
.info { fill: #2f2f2f; }
.info path { fill: none; stroke: #fff; stroke-width: 4px; }
.info-halo { fill: rgba(255, 255, 255, .5); }
.info-dot { fill: #fff; }
.mapbox { fill: #8c8f8f; }
.mapbox circle { fill: #fff; stroke: #999b9b; stroke-width: 3px; }
.mapbox-star { fill: #fff; }
.mapbox text { fill: #fff; stroke: #999b9b; stroke-width: 4.5px; paint-order: stroke; stroke-linejoin: round; font: 700 28px Lato, sans-serif; }
.locate { fill: #eceff1; stroke: #59b5a5; stroke-width: 4px; }

/* chat */
.chat { padding: 28px 14px 0 28px; display: flex; flex-direction: column; }
.stamp { align-self: center; font-size: 19.2px; line-height: 32px; color: #666b6b; font-weight: 350; margin-left: 14px; }
.stamp-second { margin-top: 16px; }
.message { display: flex; align-items: flex-end; gap: 14px; margin-top: 28px; }
.message-in { padding-left: 14px; }
.message-main { display: flex; flex-direction: column; align-items: flex-start; }
.author { font-size: 22.8px; line-height: 32px; margin: 5px 0 13px 15px; }
.bubble {
  position: relative;
  width: 346px;
  height: 114px;
  border-radius: 8px;
  padding: 16px 22px 0;
  line-height: 42px;
  white-space: nowrap;
}
.bubble::after { content: ""; position: absolute; top: 100%; width: 14px; height: 14px; }
.bubble-in { background: rgba(45, 70, 60, .08); border-bottom-left-radius: 0; font-weight: 350; font-size: 25.85px; }
.bubble-in::after { left: 0; background: inherit; clip-path: polygon(0 0, 100% 0, 0 100%); }
.message-out { justify-content: flex-end; }
.bubble-out { height: 112px; padding-top: 14px; background: #71c0b3; color: #fff; border-bottom-right-radius: 0; margin-bottom: 37px; }
.bubble-out::after { right: 0; background: inherit; clip-path: polygon(0 0, 100% 0, 100% 100%); }
.composer { margin-left: 28px; padding: 0 28px 22px; background: #fff; }
```
